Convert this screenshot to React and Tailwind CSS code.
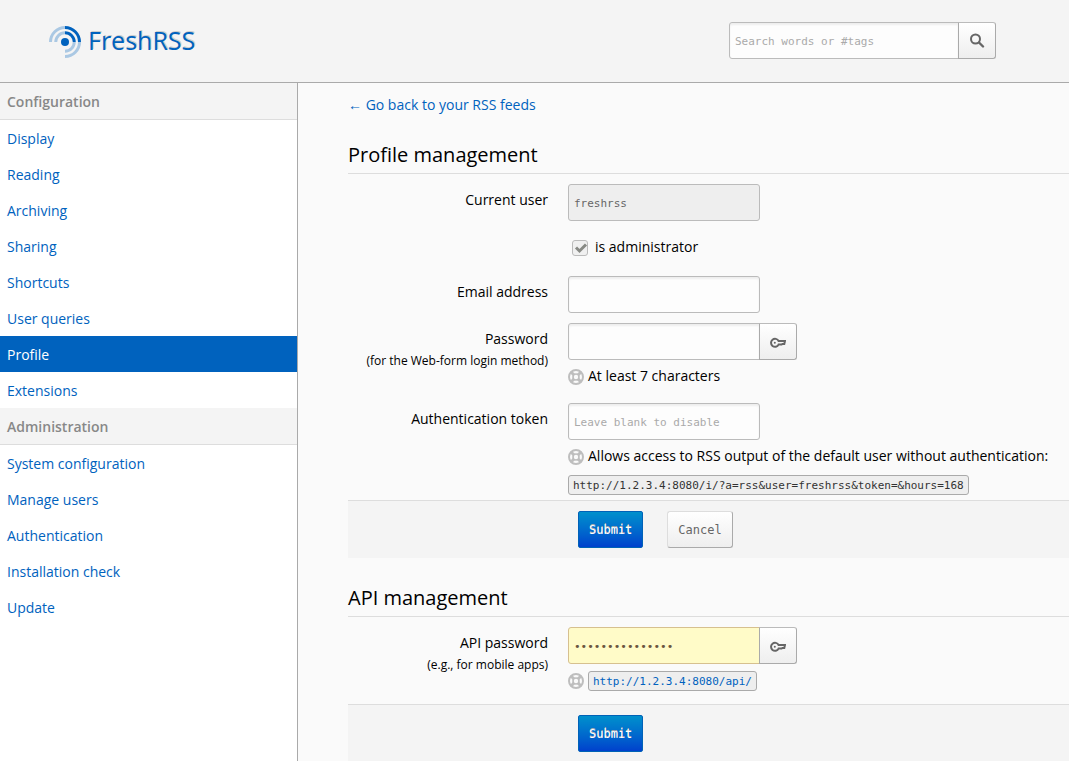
import { useState } from 'react';

const CONFIG_LINKS = ['Display', 'Reading', 'Archiving', 'Sharing', 'Shortcuts', 'User queries', 'Profile', 'Extensions'];

const ADMIN_LINKS = ['System configuration', 'Manage users', 'Authentication', 'Installation check', 'Update'];

const monoCls = "font-['DejaVu_Sans_Mono',monospace]";
const inputCls = `${monoCls} h-[37px] border border-[#bbb] px-[5px] pt-0.5 text-[11px] text-[#666] placeholder-[#aaa] bg-[#fdfdfd] shadow-[inset_0_2px_2px_#eee] focus:outline-none focus:border-[#33bbff]`;
const addonCls = 'flex h-[37px] w-[38px] -ml-px shrink-0 items-center justify-center rounded-r-[3px] border border-[#aaa] border-t-[#bbb] bg-linear-to-b from-white to-[#eee] text-[#666]';
const submitCls = `${monoCls} h-[37px] rounded-[2px] border border-[#0062b7] bg-linear-to-b from-[#0090cc] to-[#0040cc] px-2.5 text-xs text-white [text-shadow:0_-1px_0_#aaa]`;
const cancelCls = `${monoCls} h-[37px] rounded-[3px] border border-[#ddd] border-r-[#aaa] border-b-[#aaa] bg-linear-to-b from-white to-[#eee] px-2.5 text-xs text-[#666]`;
const codeCls = `${monoCls} inline-block h-5 rounded-[3px] border border-[#aaa] bg-[#eee] px-1 text-[11px] leading-5`;

function Logo() {
  return (
    <svg viewBox="0 0 32 32" className="mt-1 size-8" fill="none" stroke="#0062be" strokeWidth="3" aria-hidden="true">
      <circle cx="16" cy="16" r="4" fill="#0062be" stroke="none" />
      <g strokeOpacity="0.3">
        <path d="M1.5 16A14.5 14.5 0 0 1 16 1.5" />
        <path d="M6.75 16A9.25 9.25 0 0 1 16 6.75" />
        <path d="M30.5 16A14.5 14.5 0 0 1 16 30.5" />
        <path d="M25.25 16A9.25 9.25 0 0 1 16 25.25" />
      </g>
      <path d="M16 1.5A14.5 14.5 0 0 1 30.5 16" />
      <path d="M16 6.75A9.25 9.25 0 0 1 25.25 16" />
    </svg>
  );
}

function SearchIcon() {
  return (
    <svg viewBox="0 0 16 16" className="size-4" fill="none" stroke="currentColor" aria-hidden="true">
      <circle cx="6.5" cy="7" r="4.5" strokeWidth="2" />
      <path d="M10 10.5l4 4" strokeWidth="2.4" strokeLinecap="round" />
    </svg>
  );
}

function KeyIcon() {
  return (
    <svg viewBox="0 0 16 16" className="size-4" fill="none" stroke="currentColor" aria-hidden="true">
      <path d="M8.6 7H15L14.3 10H12.4L11.6 10.6H8.6A4 4 0 1 1 8.6 7Z" strokeWidth="2" strokeLinejoin="miter" />
      <circle cx="4.8" cy="8.8" r="1" fill="currentColor" stroke="none" />
    </svg>
  );
}

function HelpIcon({ className = '' }) {
  return (
    <svg viewBox="0 0 16 16" className={`size-4 shrink-0 ${className}`} fill="none" stroke="#bebebe" aria-hidden="true">
      <circle cx="8" cy="8" r="7" strokeWidth="2" />
      <circle cx="8" cy="8" r="3" strokeWidth="1.6" />
      <path d="M3 3l3 3M13 3l-3 3M3 13l3-3M13 13l-3-3" strokeWidth="3" />
    </svg>
  );
}

function NavSection({ title, links, active }) {
  return (
    <>
      <h2 className="h-[37px] border-b border-[#ddd] bg-[#f4f4f4] px-[7px] leading-[38px] font-semibold text-[#888]">{title}</h2>
      <ul>
        {links.map((link) => (
          <li key={link}>
            <a
              href="#"
              aria-current={link === active ? 'page' : undefined}
              className={`block h-9 px-[7px] leading-[38px] ${link === active ? 'bg-[#0062be] text-white' : 'text-[#0062be] hover:bg-[#fafafa]'}`}
            >
              {link}
            </a>
          </li>
        ))}
      </ul>
    </>
  );
}

function Field({ label, note, htmlFor, children }) {
  return (
    <div className="flex gap-5">
      <label htmlFor={htmlFor} className="w-[200px] shrink-0 pt-1 text-right leading-6">
        {label}
        {note && <span className="block text-xs leading-5">{note}</span>}
      </label>
      <div className="min-w-0 flex-1">{children}</div>
    </div>
  );
}

function PasswordInput({ id, value, onChange, filled }) {
  const [visible, setVisible] = useState(false);

  return (
    <div className="flex">
      <input
        id={id}
        type={visible ? 'text' : 'password'}
        value={value}
        onChange={(e) => onChange(e.target.value)}
        className={`${inputCls} w-48 rounded-l-[3px] ${filled ? 'border-[#d6c08f]! bg-[#fffbc8]! text-[#6b5540]! shadow-none!' : ''}`}
      />
      <button type="button" aria-label="Show password" onClick={() => setVisible((v) => !v)} className={addonCls}>
        <KeyIcon />
      </button>
    </div>
  );
}

export default function App() {
  const [search, setSearch] = useState('');
  const [email, setEmail] = useState('');
  const [password, setPassword] = useState('');
  const [token, setToken] = useState('');
  const [apiPassword, setApiPassword] = useState('freshrssapipass');

  return (
    <div className="flex min-h-screen flex-col bg-[#fafafa] font-['Open_Sans',sans-serif] text-sm text-black">
      <header className="flex h-[83px] shrink-0 items-center justify-between border-b border-[#aaa] bg-[#f4f4f4] pr-[73px] pb-0.5 pl-[49px]">
        <h1>
          <a href="#" className="flex items-center gap-[7px] text-[25px] leading-8 text-[#0062be] [text-shadow:1px_-1px_0_#ccc]">
            <Logo />
            FreshRSS
          </a>
        </h1>
        <form className="flex" onSubmit={(e) => e.preventDefault()}>
          <input
            type="search"
            aria-label="Search"
            placeholder="Search words or #tags"
            value={search}
            onChange={(e) => setSearch(e.target.value)}
            className={`${inputCls} w-[230px] rounded-l-[3px]`}
          />
          <button type="submit" aria-label="Submit search" className={addonCls}>
            <SearchIcon />
          </button>
        </form>
      </header>

      <div className="flex flex-1">
        <nav className="w-[298px] shrink-0 border-r border-[#aaa] bg-white">
          <NavSection title="Configuration" links={CONFIG_LINKS} active="Profile" />
          <NavSection title="Administration" links={ADMIN_LINKS} />
        </nav>

        <main className="min-w-0 flex-1 pl-[50px]">
          <a href="#" className="inline-block pt-2.5 leading-6 text-[#0062be]">← Go back to your RSS feeds</a>

          {/* Profile */}
          <form onSubmit={(e) => e.preventDefault()}>
            <h2 className="mt-5 mb-2.5 border-b border-[#ddd] text-xl leading-9">Profile management</h2>
            <Field label="Current user" htmlFor="current-user">
              <input id="current-user" type="text" disabled value="freshrss" className={`${inputCls} block w-48 rounded-[3px] bg-[#eee]! shadow-none!`} />
              <label className="flex h-[55px] items-center gap-[7px] pb-1 pl-1">
                <input
                  type="checkbox"
                  checked
                  disabled
                  className="mt-0.5 size-4 appearance-none rounded-[3px] border border-[#bbb] bg-[#f0f0f0]"
                />
                <svg viewBox="0 0 16 16" className="mt-0.5 -ml-[23px] size-4" fill="none" stroke="#888a85" strokeWidth="3" aria-hidden="true">
                  <path d="M4 7.5l3.5 3.5L14 4.5" />
                </svg>
                is administrator
              </label>
            </Field>
            <Field label="Email address" htmlFor="email">
              <input id="email" type="email" value={email} onChange={(e) => setEmail(e.target.value)} className={`${inputCls} mb-2.5 block w-48 rounded-[3px]`} />
            </Field>
            <Field label="Password" note="(for the Web-form login method)" htmlFor="password">
              <PasswordInput id="password" value={password} onChange={setPassword} />
              <p className="mb-2.5 flex h-[33px] items-center gap-1 pb-0.5">
                <HelpIcon className="mt-0.5" />
                At least 7 characters
              </p>
            </Field>
            <Field label="Authentication token" htmlFor="token">
              <input
                id="token"
                type="text"
                placeholder="Leave blank to disable"
                value={token}
                onChange={(e) => setToken(e.target.value)}
                className={`${inputCls} block w-48 rounded-[3px]`}
              />
              <p className="flex h-[33px] items-center gap-1 pb-0.5 whitespace-nowrap">
                <HelpIcon className="mt-0.5" />
                Allows access to RSS output of the default user without authentication:
              </p>
              <code className={`${codeCls} mt-0.5 mb-[5px] align-top text-[#333]`}>http://1.2.3.4:8080/i/?a=rss&amp;user=freshrss&amp;token=&amp;hours=168</code>
            </Field>
            <div className="flex gap-6 border-t border-[#ddd] bg-[#f4f4f4] py-2.5 pl-[230px]">
              <button type="submit" className={submitCls}>Submit</button>
              <button type="reset" className={cancelCls}>Cancel</button>
            </div>
          </form>

          {/* API */}
          <form onSubmit={(e) => e.preventDefault()}>
            <h2 className="mt-[22px] mb-2.5 border-b border-[#ddd] text-xl leading-9">API management</h2>
            <Field label="API password" note="(e.g., for mobile apps)" htmlFor="api-password">
              <PasswordInput id="api-password" value={apiPassword} onChange={setApiPassword} filled />
              <p className="mb-1.5 flex h-[34px] items-center gap-1">
                <HelpIcon />
                <a href="#" className={`${codeCls} text-[#0062be]`}>http://1.2.3.4:8080/api/</a>
              </p>
            </Field>
            <div className="flex border-t border-[#ddd] bg-[#f4f4f4] py-2.5 pl-[230px]">
              <button type="submit" className={submitCls}>Submit</button>
            </div>
          </form>
        </main>
      </div>
    </div>
  );
}
